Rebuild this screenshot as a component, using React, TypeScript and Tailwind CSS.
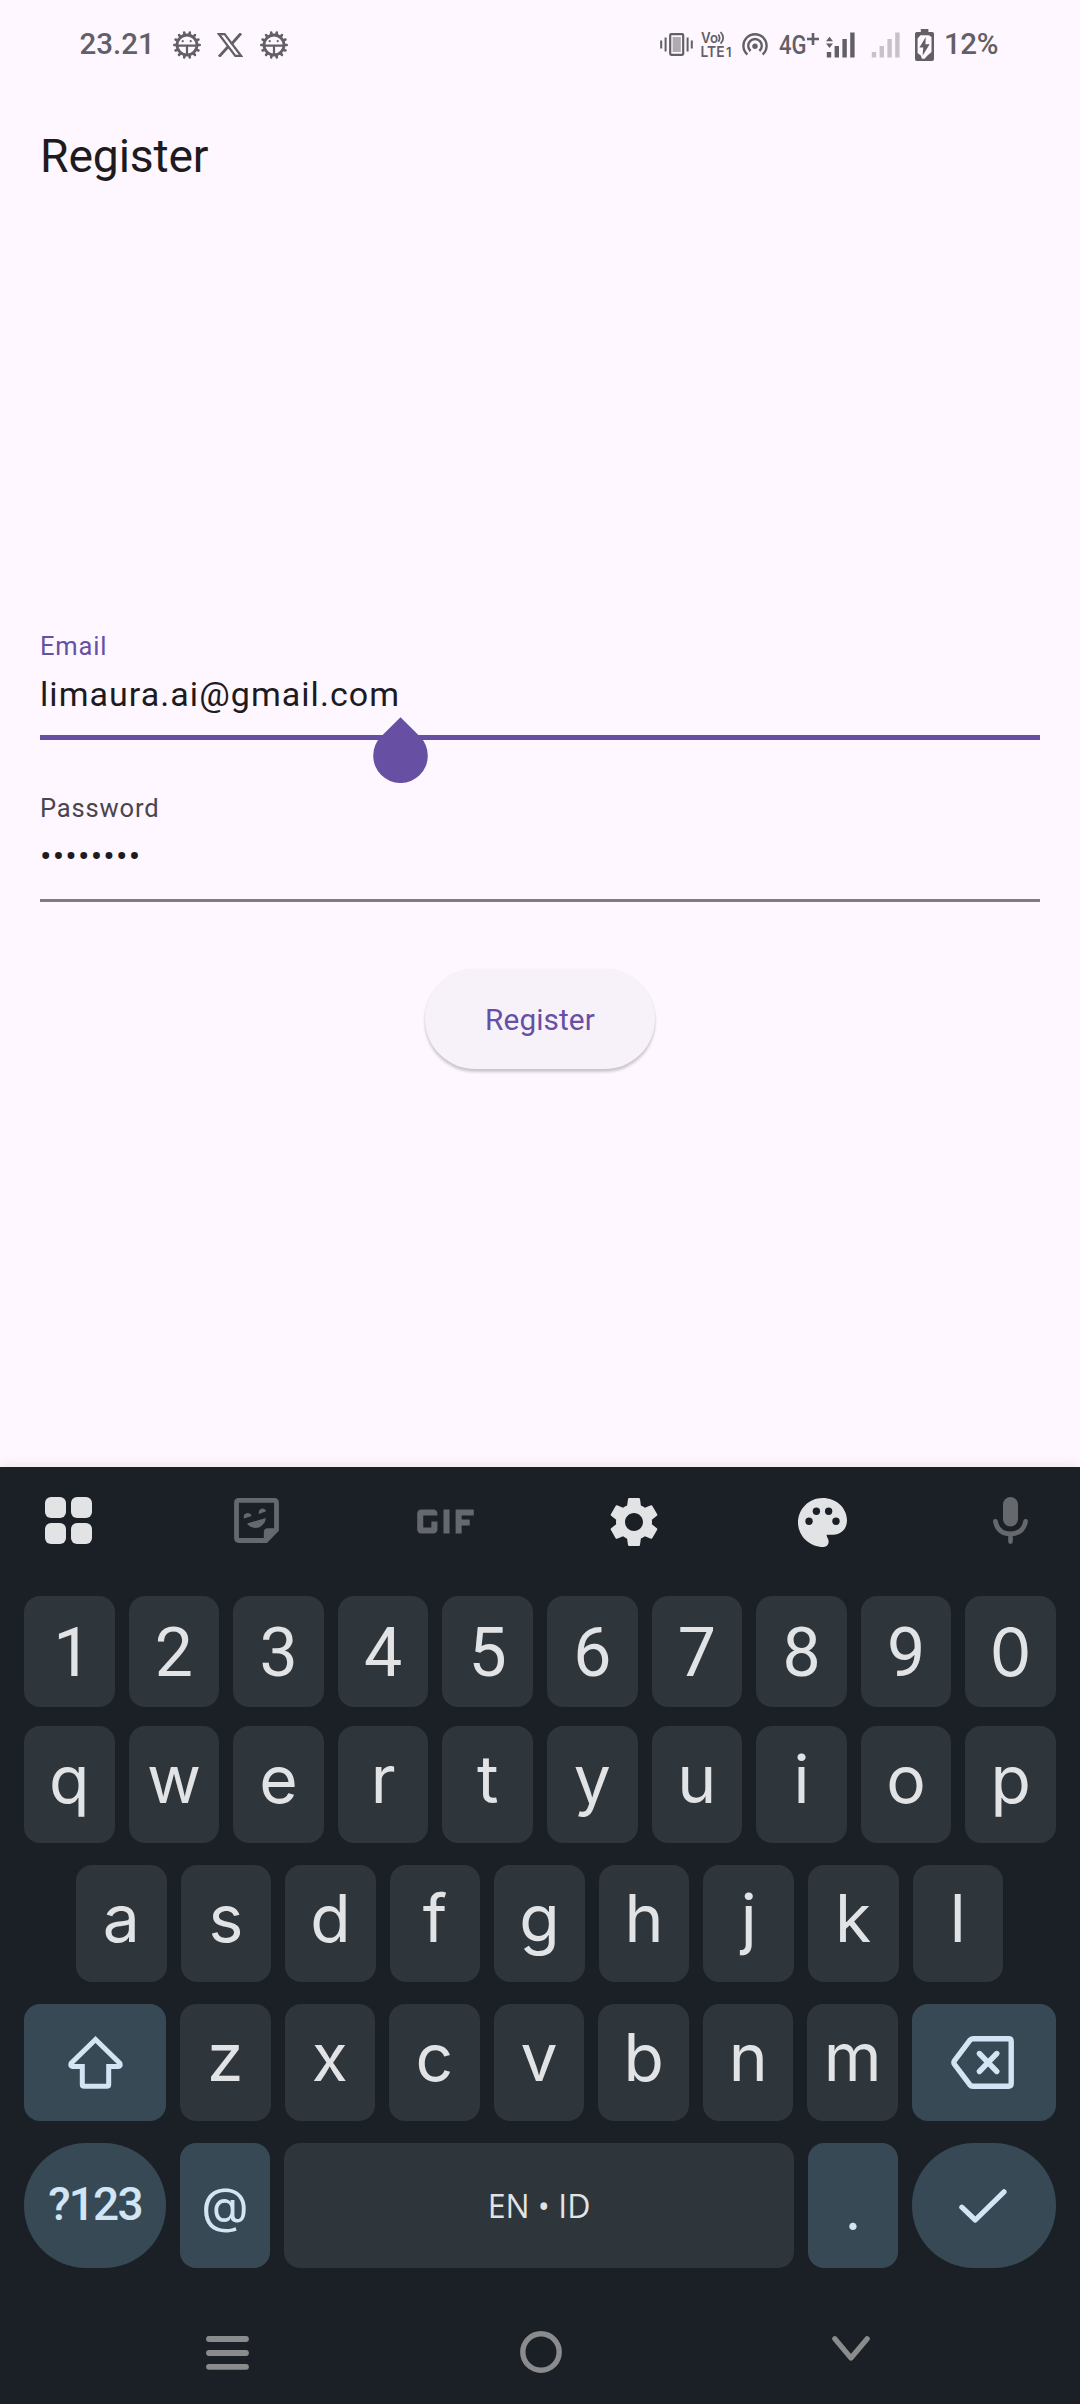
import type { ReactNode } from "react";
import { MdGif, MdSettings } from "react-icons/md";

function BugIcon() {
  const teeth = Array.from({ length: 14 }, (_, i) => (i * 360) / 14 + 12.86);
  return (
    <svg width="28" height="28" viewBox="0 0 28 28" fill="none" stroke="currentColor">
      {teeth.map((a) => (
        <path key={a} d="M14 3.5V1.3" strokeWidth="2.6" strokeLinecap="round" transform={`rotate(${a} 14 14)`} />
      ))}
      <circle cx="14" cy="14" r="10" strokeWidth="2.8" />
      <path d="M4 14.6H24M14 14.6V24.5" strokeWidth="2.2" />
      <circle cx="9.7" cy="10.2" r="1.1" fill="currentColor" stroke="none" />
      <circle cx="17.7" cy="10.2" r="1.1" fill="currentColor" stroke="none" />
    </svg>
  );
}

function XIcon() {
  return (
    <svg width="26" height="24" viewBox="0 0 26 24" fill="none" stroke="currentColor" strokeWidth="2.2">
      <path d="M2 1.2H7.6L24 22.8H18.3Z" />
      <path d="M24 0.3L14.4 11.2M10.8 14L2 23.7" strokeWidth="2.8" />
    </svg>
  );
}

function VibrateIcon() {
  return (
    <svg width="33" height="23" viewBox="0 0 33 23" fill="none" stroke="currentColor">
      <path d="M1.2 7.5V15.5M5.6 4.5V18.5M27.6 4.5V18.5M31.8 7.5V15.5" strokeWidth="2" />
      <rect x="10.2" y="1.2" width="13" height="20.6" rx="1" strokeWidth="2.2" />
      <rect x="12.6" y="4" width="8.2" height="15" fill="currentColor" fillOpacity="0.5" stroke="none" />
    </svg>
  );
}

function VolteIcon() {
  return (
    <svg className="overflow-visible" width="31" height="27" viewBox="0 0 31 27" fill="currentColor" fontFamily="Inter, sans-serif" fontWeight="600">
      <text x="0" y="12" fontSize="14" textLength="17" lengthAdjust="spacingAndGlyphs">Vo</text>
      <path d="M17.3 3.4Q20 7 17.3 10.8M19.6 1Q24.8 7 19.6 12.6" fill="none" stroke="currentColor" strokeWidth="1.7" />
      <text x="-0.5" y="25.7" fontSize="15" textLength="24" lengthAdjust="spacingAndGlyphs">LTE</text>
      <text x="25" y="25.7" fontSize="13" textLength="5.5" lengthAdjust="spacingAndGlyphs">1</text>
    </svg>
  );
}

function HotspotIcon() {
  return (
    <svg width="26" height="24" viewBox="0 0 26 24" fill="none" stroke="currentColor" strokeWidth="2.4">
      <path d="M5.3 21.5A11.6 11.6 0 1 1 20.7 21.5" />
      <path d="M8.6 18A6.8 6.8 0 1 1 17.4 18" />
      <circle cx="13" cy="13.3" r="2.7" fill="currentColor" stroke="none" />
    </svg>
  );
}

function SignalIcon({ arrows = false }: { arrows?: boolean }) {
  return (
    <svg width="29" height="26" viewBox="0 0 29 26" fill="currentColor">
      {arrows && <path d="M0 9.2L3.5 4.8L7 9.2ZM0 11.6L3.5 16L7 11.6Z" />}
      <path d="M0.8 20H5.2V25.4H0.8ZM8.6 14H13V25.4H8.6ZM16.4 7H20.8V25.4H16.4ZM24.2 0.5H28.6V25.4H24.2Z" />
    </svg>
  );
}

function BatteryIcon() {
  return (
    <svg width="19" height="32" viewBox="0 0 19 32">
      <path d="M5.8 0H13.4V3H17.2Q19 3 19 4.8V30Q19 32 17.2 32H1.8Q0 32 0 30V4.8Q0 3 1.8 3H5.8Z" fill="currentColor" />
      <path d="M5.5 6.2H13.8L16.5 8V23L12.5 26.5L9.5 29.8H7L5.8 26.5L2.6 24V9.5Z" fill="#fef7ff" />
      <path d="M10.8 8L4.4 18.6H8.2L7.6 26.8L14.6 15.2H10.4Z" fill="currentColor" />
    </svg>
  );
}

function StatusBar() {
  return (
    <div className="flex h-[86px] items-center pt-[3px] pl-[79.5px] pr-[80px] text-[#625f66]">
      <span className="w-[93px] text-[29.5px] font-medium">23.21</span>
      <BugIcon />
      <span className="ml-4"><XIcon /></span>
      <span className="ml-[17px]"><BugIcon /></span>
      <div className="ml-auto flex items-center">
        <VibrateIcon />
        <span className="ml-[8px]"><VolteIcon /></span>
        <span className="ml-[10px]"><HotspotIcon /></span>
        <span className="ml-[11px] flex w-[40px] items-start text-[25.5px] leading-[30px]">
          <span className="inline-block w-[28px] origin-left scale-x-[0.86] whitespace-nowrap font-medium">4G</span>
          <svg className="mt-[3px] shrink-0" width="12" height="12" viewBox="0 0 12 12" stroke="currentColor" strokeWidth="2.6">
            <path d="M0 6H12M6 0V12" />
          </svg>
        </span>
        <span className="ml-[7px]"><SignalIcon arrows /></span>
        <span className="ml-[16px] opacity-35"><SignalIcon /></span>
        <span className="ml-[15px]"><BatteryIcon /></span>
        <span className="ml-[10px] w-[56px] text-[29.5px] font-medium tracking-[-0.4px] whitespace-nowrap">12%</span>
      </div>
    </div>
  );
}

type Tone = "plain" | "accent";

function Key({ children, tone = "plain", className = "" }: { children: ReactNode; tone?: Tone; className?: string }) {
  const colors = tone === "plain" ? "bg-[#2e353b] text-[#e2e3e5]" : "bg-[#374955] text-[#d2e5f5]";
  return (
    <button className={`flex h-full min-w-0 items-center justify-center ${colors} ${className}`}>{children}</button>
  );
}

function Letters({ letters }: { letters: string }) {
  return (
    <>
      {letters.split("").map((l) => (
        <Key key={l} className="flex-1 rounded-2xl pb-[12px] text-[66px] leading-none">{l}</Key>
      ))}
    </>
  );
}

function Toolbar() {
  const slot = "flex w-14 shrink-0 items-center justify-center";
  return (
    <div className="flex h-[107px] items-center justify-between pl-[40.5px] pr-[41.5px] text-[#e2e3e5]">
      <div className={slot}>
        <div className="grid grid-cols-2 gap-[5px]">
          {[0, 1, 2, 3].map((i) => (
            <span key={i} className="size-[21px] rounded-[6px] bg-current" />
          ))}
        </div>
      </div>
      <div className={`${slot} text-[#65686d]`}>
        <svg width="45" height="45" viewBox="0 0 45 45" fill="currentColor">
          <path d="M5 2.4H40Q42.5 2.4 42.5 5V31.8L32 42.5H5Q2.5 42.5 2.5 40V5Q2.5 2.4 5 2.4Z" fill="none" stroke="currentColor" strokeWidth="4.8" />
          <path d="M44 30.2H34Q29.8 30.2 29.8 34V44Z" />
          <path d="M10 20.5A4 4.2 0 1 1 17.7 18ZM25 16A3.8 4 0 1 1 32.2 13.3ZM13 25.5L31.8 20C31.8 25 27 30 21.5 30Q15.5 29.5 13 25.5Z" />
        </svg>
      </div>
      <div className={`${slot} text-[#65686d]`}>
        <MdGif className="mt-[2px] shrink-0" size={97} />
      </div>
      <div className={slot}>
        <MdSettings className="mt-[2px] shrink-0" size={60} />
      </div>
      <div className={slot}>
        <svg className="mt-[3px]" width="49" height="49" viewBox="2 2 20 20">
          <path fill="currentColor" d="M12 2C6.5 2 2 6.5 2 12S6.7 22 12.4 22C13.8 22 14.5 21 14.5 19.9C14.5 18.5 13.7 18.2 13.7 17H16.3C19.5 17 22 14.6 22 11.2C22 6 17.6 2 12 2Z" />
          <g fill="#1b1f26">
            <circle cx="6.5" cy="11.5" r="1.5" />
            <circle cx="9.5" cy="7.4" r="1.5" />
            <circle cx="14.5" cy="7.4" r="1.5" />
            <circle cx="17.5" cy="11.5" r="1.5" />
          </g>
        </svg>
      </div>
      <div className={`${slot} text-[#65686d]`}>
        <svg width="35" height="47" viewBox="0 0 35 47">
          <rect x="10" y="0" width="15" height="29.5" rx="7.5" fill="currentColor" />
          <path d="M2.4 24.3C4 33 10 36.8 17.5 36.8S31 33 32.6 24.3M17.5 37V44.6" fill="none" stroke="currentColor" strokeWidth="4.7" strokeLinecap="round" />
        </svg>
      </div>
    </div>
  );
}

function Keyboard() {
  return (
    <div className="flex h-[937px] shrink-0 flex-col bg-[#1b1f26] font-[Inter,sans-serif] shadow-[0_-2px_12px_rgba(0,0,0,0.08)]">
      <Toolbar />
      <div className="mt-[22px] grid h-[111px] grid-cols-10 gap-[14px] px-6">
        {"123456789".split("").map((d) => (
          <Key key={d} className={`rounded-2xl pt-[2px] font-[Roboto,sans-serif] text-[68px] leading-none ${d === "1" ? "pl-[6px]" : ""}`}>{d}</Key>
        ))}
        <Key className="rounded-2xl text-[66px] leading-none">0</Key>
      </div>
      <div className="mt-[19px] flex h-[117px] gap-[14px] px-6"><Letters letters="qwertyuiop" /></div>
      <div className="mt-[22px] flex h-[117px] gap-[14px] pl-[76px] pr-[77px]"><Letters letters="asdfghjkl" /></div>
      <div className="mt-[22px] flex h-[117px] gap-[14px] px-6">
        <Key tone="accent" className="w-[142px] shrink-0 rounded-2xl">
          <svg width="55" height="53" viewBox="0 0 55 53" fill="none" stroke="currentColor" strokeWidth="5" strokeLinejoin="round">
            <path d="M27.5 3.5L3.2 27.2Q2 30.3 4.5 30.4H14.3V48.5Q14.3 50.3 16.3 50.3H38.7Q40.7 50.3 40.7 48.5V30.4H50.5Q53 30.3 51.8 27.2Z" strokeLinejoin="miter" />
          </svg>
        </Key>
        <Letters letters="zxcvbnm" />
        <Key tone="accent" className="w-[144px] shrink-0 rounded-2xl">
          <svg className="-ml-[3px]" width="63" height="53" viewBox="0 0 63 53" fill="none" stroke="currentColor" strokeWidth="5.4" strokeLinecap="round" strokeLinejoin="round">
            <path d="M22 2.8H57.5Q60.2 2.8 60.2 5.5V47.5Q60.2 50.2 57.5 50.2H22Q20 50.2 18.8 48.7L3.6 28.5Q2.2 26.5 3.6 24.5L18.8 4.3Q20 2.8 22 2.8Z" />
            <path d="M28.4 17.5L45.8 35.5M45.8 17.5L28.4 35.5" />
          </svg>
        </Key>
      </div>
      <div className="mt-[22px] flex h-[125px] gap-[14px] px-6">
        <Key tone="accent" className="w-[142px] shrink-0 rounded-[62px] pb-[2px] font-[Roboto,sans-serif] text-[46px] font-medium tracking-[-1.8px]">?123</Key>
        <Key tone="accent" className="w-[90px] shrink-0 rounded-2xl text-[49px]">@</Key>
        <Key className="flex-1 rounded-2xl font-['Open_Sans',sans-serif] text-[32px]">EN • ID</Key>
        <Key tone="accent" className="w-[90px] shrink-0 rounded-2xl pt-[10px] text-[55px]">.</Key>
        <Key tone="accent" className="w-[144px] shrink-0 rounded-[62px]">
          <svg className="-ml-[2px]" width="48" height="34" viewBox="0 0 48 34" fill="none" stroke="currentColor" strokeWidth="5.2" strokeLinecap="round" strokeLinejoin="round">
            <path d="M2.8 18.2L16.3 31L45 2.8" />
          </svg>
        </Key>
      </div>
      <div className="mt-8 flex h-[104px] items-center justify-between px-[206px] text-[#8a8b8d]">
        <svg className="mt-px" width="43" height="34" viewBox="0 0 43 34" stroke="currentColor" strokeWidth="5.8" strokeLinecap="round">
          <path d="M3 3H40M3 17H40M3 30.8H40" />
        </svg>
        <svg width="42" height="42" viewBox="0 0 42 42" fill="none" stroke="currentColor" strokeWidth="5.4">
          <circle cx="21" cy="21" r="18.2" />
        </svg>
        <svg className="mr-[4px] mb-[8px]" width="38" height="25" viewBox="0 0 38 25" fill="none" stroke="currentColor" strokeWidth="5.2" strokeLinecap="round" strokeLinejoin="round">
          <path d="M2.8 2.8L19 22L35.2 2.8" />
        </svg>
      </div>
    </div>
  );
}

export default function App() {
  return (
    <div className="flex h-[2404px] w-[1080px] flex-col overflow-hidden bg-[#fef7ff] font-[Roboto,sans-serif] text-[#1d1b20]">
      <StatusBar />
      <header className="flex h-[140px] items-center px-10">
        <h1 className="text-[46.3px] leading-none tracking-[-0.15px]">Register</h1>
      </header>
      <main className="flex flex-1 flex-col px-10 pt-[405px]">
        <label className="h-[30px] text-[25.5px] leading-[30px] tracking-[0.85px] text-[#6750a4]">Email</label>
        <div className="relative mt-[13px] h-[66px] border-b-[5px] border-[#6750a4] text-[34px] leading-[40px] tracking-[1.05px]">
          limaura.ai@gmail.com
          <svg className="absolute top-[43px] left-[333px]" width="55" height="66" viewBox="0 0 55 66" fill="#6750a4">
            <path d="M27.5 0.3L46.9 19.5A27.3 27.3 0 1 1 8.1 19.5Z" />
          </svg>
        </div>
        <label className="mt-[53px] h-[30px] text-[25.5px] leading-[30px] tracking-[0.85px] text-[#49454f]">Password</label>
        <div className="mt-[13px] h-[66px] border-b-[3px] border-[#7f7a84] text-[34px] leading-[40px] tracking-[1.2px]">••••••••</div>
        <button className="mt-[67px] h-[100px] w-[230px] self-center rounded-full bg-[#f7f2fa] pt-[2px] text-[29.75px] tracking-[0.1px] text-[#6750a4] shadow-[0_3px_3px_rgba(0,0,0,0.2),0_0_2px_rgba(0,0,0,0.06)]">
          Register
        </button>
      </main>
      <Keyboard />
    </div>
  );
}
